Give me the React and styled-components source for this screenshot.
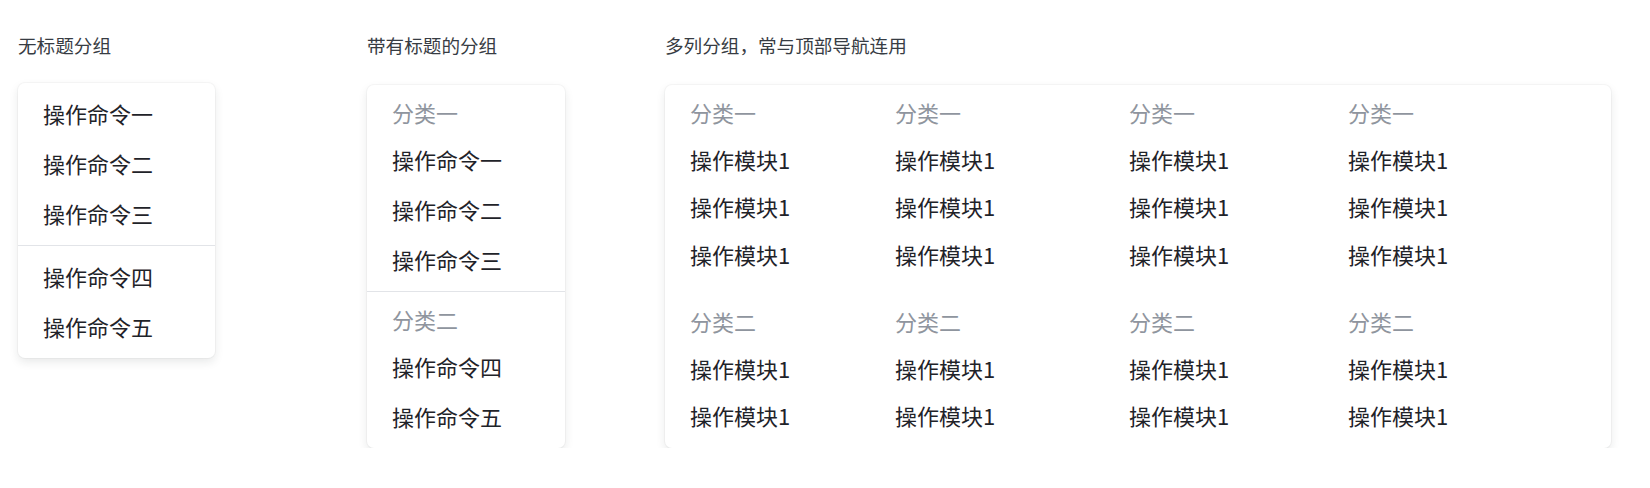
import React from "react";
import styled, { createGlobalStyle } from "styled-components";

const GlobalStyle = createGlobalStyle`
  body {
    margin: 0;
    background: #ffffff;
    font-family: "Noto Sans CJK SC", "Noto Sans", sans-serif;
    color: #1f2329;
  }
`;

const Page = styled.div`
  display: flex;
  align-items: flex-start;
  padding: 33px 0 0 18px;
`;

const Section = styled.section`
  width: ${(p) => p.width}px;
  flex-shrink: 0;
  display: flex;
  flex-direction: column;
`;

const Title = styled.div`
  font-size: 18.6px;
  line-height: 24px;
  color: #373c43;
  margin-bottom: ${(p) => p.gap}px;
`;

const Card = styled.div`
  width: ${(p) => p.width}px;
  box-sizing: border-box;
  background: #ffffff;
  border-radius: 7px;
  box-shadow: 0 0 0 1px rgba(31, 35, 41, 0.03), 0 4px 10px rgba(31, 35, 41, 0.1);
`;

const Group = styled.div`
  padding: 5px 0 7px;

  & + & {
    border-top: 1px solid #e2e4e8;
  }
`;

const Header = styled.div`
  height: 44px;
  line-height: 44px;
  padding-left: 25px;
  font-size: 22px;
  color: #8f959e;
`;

const Item = styled.div`
  height: ${(p) => p.h || 50}px;
  line-height: ${(p) => p.h || 50}px;
  padding-left: 25px;
  font-size: 22px;
  color: #1f2329;
  cursor: pointer;
  white-space: nowrap;
`;

// multi column menu: groups stacked, each group split into columns
const Columns = styled.div`
  display: grid;
  grid-template-columns: 205px 234px 219px 1fr;
  padding: ${(p) => p.pad};
`;

const Column = styled.div`
  display: flex;
  flex-direction: column;
`;

const ColHeader = styled(Header)`
  height: 48px;
  line-height: 48px;
`;

const plain = [
  ["操作命令一", "操作命令二", "操作命令三"],
  ["操作命令四", "操作命令五"],
];

const titled = [
  { name: "分类一", items: ["操作命令一", "操作命令二", "操作命令三"] },
  { name: "分类二", items: ["操作命令四", "操作命令五"] },
];

const multi = [
  { name: "分类一", count: 3, pad: "2.5px 0 0" },
  { name: "分类二", count: 2, pad: "18.5px 0 8.5px" },
];

export default function App() {
  return (
    <>
      <GlobalStyle />
      <Page>
        <Section width={349}>
          <Title gap={26}>无标题分组</Title>
          <Card width={197}>
            {plain.map((group, i) => (
              <Group key={i}>
                {group.map((label) => (
                  <Item key={label}>{label}</Item>
                ))}
              </Group>
            ))}
          </Card>
        </Section>

        <Section width={298}>
          <Title gap={28}>带有标题的分组</Title>
          <Card width={198}>
            {titled.map((group) => (
              <Group key={group.name}>
                <Header>{group.name}</Header>
                {group.items.map((label) => (
                  <Item key={label}>{label}</Item>
                ))}
              </Group>
            ))}
          </Card>
        </Section>

        <Section width={946}>
          <Title gap={28}>多列分组，常与顶部导航连用</Title>
          <Card width={946}>
            {multi.map((group) => (
              <Columns key={group.name} pad={group.pad}>
                {[0, 1, 2, 3].map((col) => (
                  <Column key={col}>
                    <ColHeader>{group.name}</ColHeader>
                    {Array.from({ length: group.count }).map((_, n) => (
                      <Item key={n} h={47.5}>
                        操作模块1
                      </Item>
                    ))}
                  </Column>
                ))}
              </Columns>
            ))}
          </Card>
        </Section>
      </Page>
    </>
  );
}
